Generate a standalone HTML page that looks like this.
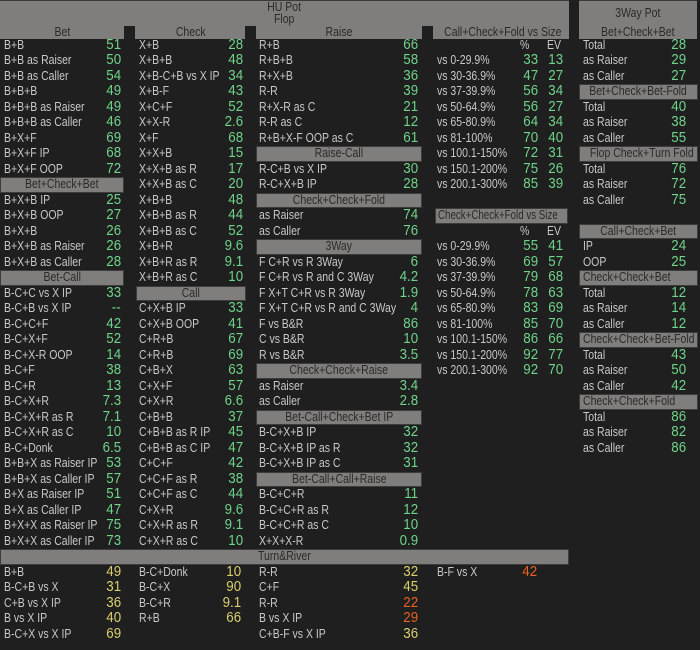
<!DOCTYPE html>
<html><head><meta charset="utf-8"><style>
*{margin:0;padding:0;box-sizing:border-box}
body{width:700px;height:650px;background:#1f1f1f;font-family:"Liberation Sans",Arial,sans-serif;overflow:hidden;position:relative;color:#c8c8c8}
.top{position:absolute;background:#7f7e7c;border-top:1px solid #3a3a3a;color:#2a2a2a;font-size:12.5px}
.notch{position:absolute;top:26px;height:13px;width:11px;background:#1f1f1f}
.c{position:absolute}
.r{height:15.5px;line-height:15.5px;position:relative;font-size:12.5px;white-space:nowrap}
.l{display:inline-block;transform:scaleX(.84);transform-origin:0 50%}
.s{display:inline-block;transform:scaleX(.84);transform-origin:50% 50%}
.v{position:absolute;top:0;font-size:14.5px;color:#6fd38a;transform:scaleX(.92);transform-origin:100% 50%}
.y{color:#d9cf6e}.o{color:#e8621e}
.h{height:15.5px;line-height:13.5px;background:#7f7e7c;border:1px solid #3c3c3c;color:#2a2a2a;text-align:center;font-size:12.5px;white-space:nowrap;overflow:hidden}
.hl{text-align:left;padding-left:3px}
.hl .s{transform-origin:0 50%}
.t{position:absolute;font-size:12.5px;color:#2a2a2a;text-align:center;white-space:nowrap}
</style></head><body>
<div class="top" style="left:0;top:0;width:569px;height:39px"></div>
<div class="t" style="left:0;width:569px;top:0"><span class="s">HU Pot</span></div>
<div class="t" style="left:0;width:569px;top:12px"><span class="s">Flop</span></div>
<div class="notch" style="left:124px"></div>
<div class="notch" style="left:245px"></div>
<div class="notch" style="left:422px"></div>
<div class="t" style="left:0;width:124px;top:25px"><span class="s">Bet</span></div>
<div class="t" style="left:136px;width:110px;top:25px"><span class="s">Check</span></div>
<div class="t" style="left:256px;width:166px;top:25px"><span class="s">Raise</span></div>
<div class="t" style="left:433px;width:135px;top:25px"><span class="s">Call+Check+Fold vs Size</span></div>
<div class="top" style="left:579px;top:0;width:118px;height:39px"></div>
<div class="t" style="left:579px;width:118px;top:6px"><span class="s">3Way Pot</span></div>
<div class="t" style="left:579px;width:118px;top:25px"><span class="s">Bet+Check+Bet</span></div>

<!-- col1 -->
<div class="c" style="left:0;top:37.75px;width:124px;padding-left:4px">
<div class="r"><span class="l">B+B</span><span class="v" style="right:3px">51</span></div>
<div class="r"><span class="l">B+B as Raiser</span><span class="v" style="right:3px">50</span></div>
<div class="r"><span class="l">B+B as Caller</span><span class="v" style="right:3px">54</span></div>
<div class="r"><span class="l">B+B+B</span><span class="v" style="right:3px">49</span></div>
<div class="r"><span class="l">B+B+B as Raiser</span><span class="v" style="right:3px">49</span></div>
<div class="r"><span class="l">B+B+B as Caller</span><span class="v" style="right:3px">46</span></div>
<div class="r"><span class="l">B+X+F</span><span class="v" style="right:3px">69</span></div>
<div class="r"><span class="l">B+X+F IP</span><span class="v" style="right:3px">68</span></div>
<div class="r"><span class="l">B+X+F OOP</span><span class="v" style="right:3px">72</span></div>
<div class="h" style="margin-left:-4px"><span class="s">Bet+Check+Bet</span></div>
<div class="r"><span class="l">B+X+B IP</span><span class="v" style="right:3px">25</span></div>
<div class="r"><span class="l">B+X+B OOP</span><span class="v" style="right:3px">27</span></div>
<div class="r"><span class="l">B+X+B</span><span class="v" style="right:3px">26</span></div>
<div class="r"><span class="l">B+X+B as Raiser</span><span class="v" style="right:3px">26</span></div>
<div class="r"><span class="l">B+X+B as Caller</span><span class="v" style="right:3px">28</span></div>
<div class="h" style="margin-left:-4px"><span class="s">Bet-Call</span></div>
<div class="r"><span class="l">B-C+C vs X IP</span><span class="v" style="right:3px">33</span></div>
<div class="r"><span class="l">B-C+B vs X IP</span><span class="v" style="right:3px">--</span></div>
<div class="r"><span class="l">B-C+C+F</span><span class="v" style="right:3px">42</span></div>
<div class="r"><span class="l">B-C+X+F</span><span class="v" style="right:3px">52</span></div>
<div class="r"><span class="l">B-C+X-R OOP</span><span class="v" style="right:3px">14</span></div>
<div class="r"><span class="l">B-C+F</span><span class="v" style="right:3px">38</span></div>
<div class="r"><span class="l">B-C+R</span><span class="v" style="right:3px">13</span></div>
<div class="r"><span class="l">B-C+X+R</span><span class="v" style="right:3px">7.3</span></div>
<div class="r"><span class="l">B-C+X+R as R</span><span class="v" style="right:3px">7.1</span></div>
<div class="r"><span class="l">B-C+X+R as C</span><span class="v" style="right:3px">10</span></div>
<div class="r"><span class="l">B-C+Donk</span><span class="v" style="right:3px">6.5</span></div>
<div class="r"><span class="l">B+B+X as Raiser IP</span><span class="v" style="right:3px">53</span></div>
<div class="r"><span class="l">B+B+X as Caller IP</span><span class="v" style="right:3px">57</span></div>
<div class="r"><span class="l">B+X as Raiser IP</span><span class="v" style="right:3px">51</span></div>
<div class="r"><span class="l">B+X as Caller IP</span><span class="v" style="right:3px">47</span></div>
<div class="r"><span class="l">B+X+X as Raiser IP</span><span class="v" style="right:3px">75</span></div>
<div class="r"><span class="l">B+X+X as Caller IP</span><span class="v" style="right:3px">73</span></div>
</div>

<!-- col2 -->
<div class="c" style="left:136px;top:37.75px;width:110px;padding-left:3px">
<div class="r"><span class="l">X+B</span><span class="v" style="right:3px">28</span></div>
<div class="r"><span class="l">X+B+B</span><span class="v" style="right:3px">48</span></div>
<div class="r"><span class="l">X+B-C+B vs X IP</span><span class="v" style="right:3px">34</span></div>
<div class="r"><span class="l">X+B-F</span><span class="v" style="right:3px">43</span></div>
<div class="r"><span class="l">X+C+F</span><span class="v" style="right:3px">52</span></div>
<div class="r"><span class="l">X+X-R</span><span class="v" style="right:3px">2.6</span></div>
<div class="r"><span class="l">X+F</span><span class="v" style="right:3px">68</span></div>
<div class="r"><span class="l">X+X+B</span><span class="v" style="right:3px">15</span></div>
<div class="r"><span class="l">X+X+B as R</span><span class="v" style="right:3px">17</span></div>
<div class="r"><span class="l">X+X+B as C</span><span class="v" style="right:3px">20</span></div>
<div class="r"><span class="l">X+B+B</span><span class="v" style="right:3px">48</span></div>
<div class="r"><span class="l">X+B+B as R</span><span class="v" style="right:3px">44</span></div>
<div class="r"><span class="l">X+B+B as C</span><span class="v" style="right:3px">52</span></div>
<div class="r"><span class="l">X+B+R</span><span class="v" style="right:3px">9.6</span></div>
<div class="r"><span class="l">X+B+R as R</span><span class="v" style="right:3px">9.1</span></div>
<div class="r"><span class="l">X+B+R as C</span><span class="v" style="right:3px">10</span></div>
<div class="h" style="margin-left:-3px"><span class="s">Call</span></div>
<div class="r"><span class="l">C+X+B IP</span><span class="v" style="right:3px">33</span></div>
<div class="r"><span class="l">C+X+B OOP</span><span class="v" style="right:3px">41</span></div>
<div class="r"><span class="l">C+R+B</span><span class="v" style="right:3px">67</span></div>
<div class="r"><span class="l">C+R+B</span><span class="v" style="right:3px">69</span></div>
<div class="r"><span class="l">C+B+X</span><span class="v" style="right:3px">63</span></div>
<div class="r"><span class="l">C+X+F</span><span class="v" style="right:3px">57</span></div>
<div class="r"><span class="l">C+X+R</span><span class="v" style="right:3px">6.6</span></div>
<div class="r"><span class="l">C+B+B</span><span class="v" style="right:3px">37</span></div>
<div class="r"><span class="l">C+B+B as R IP</span><span class="v" style="right:3px">45</span></div>
<div class="r"><span class="l">C+B+B as C IP</span><span class="v" style="right:3px">47</span></div>
<div class="r"><span class="l">C+C+F</span><span class="v" style="right:3px">42</span></div>
<div class="r"><span class="l">C+C+F as R</span><span class="v" style="right:3px">38</span></div>
<div class="r"><span class="l">C+C+F as C</span><span class="v" style="right:3px">44</span></div>
<div class="r"><span class="l">C+X+R</span><span class="v" style="right:3px">9.6</span></div>
<div class="r"><span class="l">C+X+R as R</span><span class="v" style="right:3px">9.1</span></div>
<div class="r"><span class="l">C+X+R as C</span><span class="v" style="right:3px">10</span></div>
</div>

<!-- col3 -->
<div class="c" style="left:256px;top:37.75px;width:166px;padding-left:3px">
<div class="r"><span class="l">R+B</span><span class="v" style="right:4px">66</span></div>
<div class="r"><span class="l">R+B+B</span><span class="v" style="right:4px">58</span></div>
<div class="r"><span class="l">R+X+B</span><span class="v" style="right:4px">36</span></div>
<div class="r"><span class="l">R-R</span><span class="v" style="right:4px">39</span></div>
<div class="r"><span class="l">R+X-R as C</span><span class="v" style="right:4px">21</span></div>
<div class="r"><span class="l">R-R as C</span><span class="v" style="right:4px">12</span></div>
<div class="r"><span class="l">R+B+X-F OOP as C</span><span class="v" style="right:4px">61</span></div>
<div class="h" style="margin-left:-3px"><span class="s">Raise-Call</span></div>
<div class="r"><span class="l">R-C+B vs X IP</span><span class="v" style="right:4px">30</span></div>
<div class="r"><span class="l">R-C+X+B IP</span><span class="v" style="right:4px">28</span></div>
<div class="h" style="margin-left:-3px"><span class="s">Check+Check+Fold</span></div>
<div class="r"><span class="l">as Raiser</span><span class="v" style="right:4px">74</span></div>
<div class="r"><span class="l">as Caller</span><span class="v" style="right:4px">76</span></div>
<div class="h" style="margin-left:-3px"><span class="s">3Way</span></div>
<div class="r"><span class="l">F C+R vs R 3Way</span><span class="v" style="right:4px">6</span></div>
<div class="r"><span class="l">F C+R vs R and C 3Way</span><span class="v" style="right:4px">4.2</span></div>
<div class="r"><span class="l">F X+T C+R vs R 3Way</span><span class="v" style="right:4px">1.9</span></div>
<div class="r"><span class="l">F X+T C+R vs R and C 3Way</span><span class="v" style="right:4px">4</span></div>
<div class="r"><span class="l">F vs B&amp;R</span><span class="v" style="right:4px">86</span></div>
<div class="r"><span class="l">C vs B&amp;R</span><span class="v" style="right:4px">10</span></div>
<div class="r"><span class="l">R vs B&amp;R</span><span class="v" style="right:4px">3.5</span></div>
<div class="h" style="margin-left:-3px"><span class="s">Check+Check+Raise</span></div>
<div class="r"><span class="l">as Raiser</span><span class="v" style="right:4px">3.4</span></div>
<div class="r"><span class="l">as Caller</span><span class="v" style="right:4px">2.8</span></div>
<div class="h" style="margin-left:-3px"><span class="s">Bet-Call+Check+Bet IP</span></div>
<div class="r"><span class="l">B-C+X+B IP</span><span class="v" style="right:4px">32</span></div>
<div class="r"><span class="l">B-C+X+B IP as R</span><span class="v" style="right:4px">32</span></div>
<div class="r"><span class="l">B-C+X+B IP as C</span><span class="v" style="right:4px">31</span></div>
<div class="h" style="margin-left:-3px"><span class="s">Bet-Call+Call+Raise</span></div>
<div class="r"><span class="l">B-C+C+R</span><span class="v" style="right:4px">11</span></div>
<div class="r"><span class="l">B-C+C+R as R</span><span class="v" style="right:4px">12</span></div>
<div class="r"><span class="l">B-C+C+R as C</span><span class="v" style="right:4px">10</span></div>
<div class="r"><span class="l">X+X+X-R</span><span class="v" style="right:4px">0.9</span></div>
</div>

<!-- col4 -->
<div class="c" style="left:433px;top:37.75px;width:135px;padding-left:4px">
<div class="r"><span class="l" style="position:absolute;left:83px">%</span><span class="l" style="position:absolute;left:110px">EV</span></div>
<div class="r"><span class="l">vs 0-29.9%</span><span class="v" style="right:30px">33</span><span class="v" style="right:5px">13</span></div>
<div class="r"><span class="l">vs 30-36.9%</span><span class="v" style="right:30px">47</span><span class="v" style="right:5px">27</span></div>
<div class="r"><span class="l">vs 37-39.9%</span><span class="v" style="right:30px">56</span><span class="v" style="right:5px">34</span></div>
<div class="r"><span class="l">vs 50-64.9%</span><span class="v" style="right:30px">56</span><span class="v" style="right:5px">27</span></div>
<div class="r"><span class="l">vs 65-80.9%</span><span class="v" style="right:30px">64</span><span class="v" style="right:5px">34</span></div>
<div class="r"><span class="l">vs 81-100%</span><span class="v" style="right:30px">70</span><span class="v" style="right:5px">40</span></div>
<div class="r"><span class="l">vs 100.1-150%</span><span class="v" style="right:30px">72</span><span class="v" style="right:5px">31</span></div>
<div class="r"><span class="l">vs 150.1-200%</span><span class="v" style="right:30px">75</span><span class="v" style="right:5px">26</span></div>
<div class="r"><span class="l">vs 200.1-300%</span><span class="v" style="right:30px">85</span><span class="v" style="right:5px">39</span></div>
<div class="r"></div>
<div class="h hl" style="margin-left:-2px;padding-left:2px"><span class="s" style="transform:scaleX(.78)">Check+Check+Fold vs Size</span></div>
<div class="r"><span class="l" style="position:absolute;left:83px">%</span><span class="l" style="position:absolute;left:110px">EV</span></div>
<div class="r"><span class="l">vs 0-29.9%</span><span class="v" style="right:30px">55</span><span class="v" style="right:5px">41</span></div>
<div class="r"><span class="l">vs 30-36.9%</span><span class="v" style="right:30px">69</span><span class="v" style="right:5px">57</span></div>
<div class="r"><span class="l">vs 37-39.9%</span><span class="v" style="right:30px">79</span><span class="v" style="right:5px">68</span></div>
<div class="r"><span class="l">vs 50-64.9%</span><span class="v" style="right:30px">78</span><span class="v" style="right:5px">63</span></div>
<div class="r"><span class="l">vs 65-80.9%</span><span class="v" style="right:30px">83</span><span class="v" style="right:5px">69</span></div>
<div class="r"><span class="l">vs 81-100%</span><span class="v" style="right:30px">85</span><span class="v" style="right:5px">70</span></div>
<div class="r"><span class="l">vs 100.1-150%</span><span class="v" style="right:30px">86</span><span class="v" style="right:5px">66</span></div>
<div class="r"><span class="l">vs 150.1-200%</span><span class="v" style="right:30px">92</span><span class="v" style="right:5px">77</span></div>
<div class="r"><span class="l">vs 200.1-300%</span><span class="v" style="right:30px">92</span><span class="v" style="right:5px">70</span></div>
</div>

<!-- col5 -->
<div class="c" style="left:579px;top:37.75px;width:119px;padding-left:4px">
<div class="r"><span class="l">Total</span><span class="v" style="right:12px">28</span></div>
<div class="r"><span class="l">as Raiser</span><span class="v" style="right:12px">29</span></div>
<div class="r"><span class="l">as Caller</span><span class="v" style="right:12px">27</span></div>
<div class="h" style="margin-left:-4px"><span class="s">Bet+Check+Bet-Fold</span></div>
<div class="r"><span class="l">Total</span><span class="v" style="right:12px">40</span></div>
<div class="r"><span class="l">as Raiser</span><span class="v" style="right:12px">38</span></div>
<div class="r"><span class="l">as Caller</span><span class="v" style="right:12px">55</span></div>
<div class="h" style="margin-left:-4px"><span class="s">Flop Check+Turn Fold</span></div>
<div class="r"><span class="l">Total</span><span class="v" style="right:12px">76</span></div>
<div class="r"><span class="l">as Raiser</span><span class="v" style="right:12px">72</span></div>
<div class="r"><span class="l">as Caller</span><span class="v" style="right:12px">75</span></div>
<div class="r"></div>
<div class="h" style="margin-left:-4px"><span class="s">Call+Check+Bet</span></div>
<div class="r"><span class="l">IP</span><span class="v" style="right:12px">24</span></div>
<div class="r"><span class="l">OOP</span><span class="v" style="right:12px">25</span></div>
<div class="h hl" style="margin-left:-4px"><span class="s">Check+Check+Bet</span></div>
<div class="r"><span class="l">Total</span><span class="v" style="right:12px">12</span></div>
<div class="r"><span class="l">as Raiser</span><span class="v" style="right:12px">14</span></div>
<div class="r"><span class="l">as Caller</span><span class="v" style="right:12px">12</span></div>
<div class="h hl" style="margin-left:-4px"><span class="s">Check+Check+Bet-Fold</span></div>
<div class="r"><span class="l">Total</span><span class="v" style="right:12px">43</span></div>
<div class="r"><span class="l">as Raiser</span><span class="v" style="right:12px">50</span></div>
<div class="r"><span class="l">as Caller</span><span class="v" style="right:12px">42</span></div>
<div class="h hl" style="margin-left:-4px"><span class="s">Check+Check+Fold</span></div>
<div class="r"><span class="l">Total</span><span class="v" style="right:12px">86</span></div>
<div class="r"><span class="l">as Raiser</span><span class="v" style="right:12px">82</span></div>
<div class="r"><span class="l">as Caller</span><span class="v" style="right:12px">86</span></div>
</div>

<!-- Turn & River -->
<div class="h" style="position:absolute;left:0;top:549.25px;width:569px"><span class="s">Turn&amp;River</span></div>
<div class="c" style="left:0;top:564.75px;width:124px;padding-left:4px">
<div class="r"><span class="l">B+B</span><span class="v y" style="right:3px">49</span></div>
<div class="r"><span class="l">B-C+B vs X</span><span class="v y" style="right:3px">31</span></div>
<div class="r"><span class="l">C+B vs X IP</span><span class="v y" style="right:3px">36</span></div>
<div class="r"><span class="l">B vs X IP</span><span class="v y" style="right:3px">40</span></div>
<div class="r"><span class="l">B-C+X vs X IP</span><span class="v y" style="right:3px">69</span></div>
</div>
<div class="c" style="left:136px;top:564.75px;width:110px;padding-left:3px">
<div class="r"><span class="l">B-C+Donk</span><span class="v y" style="right:5px">10</span></div>
<div class="r"><span class="l">B-C+X</span><span class="v y" style="right:5px">90</span></div>
<div class="r"><span class="l">B-C+R</span><span class="v y" style="right:5px">9.1</span></div>
<div class="r"><span class="l">R+B</span><span class="v y" style="right:5px">66</span></div>
</div>
<div class="c" style="left:256px;top:564.75px;width:166px;padding-left:3px">
<div class="r"><span class="l">R-R</span><span class="v y" style="right:4px">32</span></div>
<div class="r"><span class="l">C+F</span><span class="v y" style="right:4px">45</span></div>
<div class="r"><span class="l">R-R</span><span class="v o" style="right:4px">22</span></div>
<div class="r"><span class="l">B vs X IP</span><span class="v o" style="right:4px">29</span></div>
<div class="r"><span class="l">C+B-F vs X IP</span><span class="v y" style="right:4px">36</span></div>
</div>
<div class="c" style="left:433px;top:564.75px;width:135px;padding-left:4px">
<div class="r"><span class="l">B-F vs X</span><span class="v o" style="right:31px">42</span></div>
</div>
</body></html>
